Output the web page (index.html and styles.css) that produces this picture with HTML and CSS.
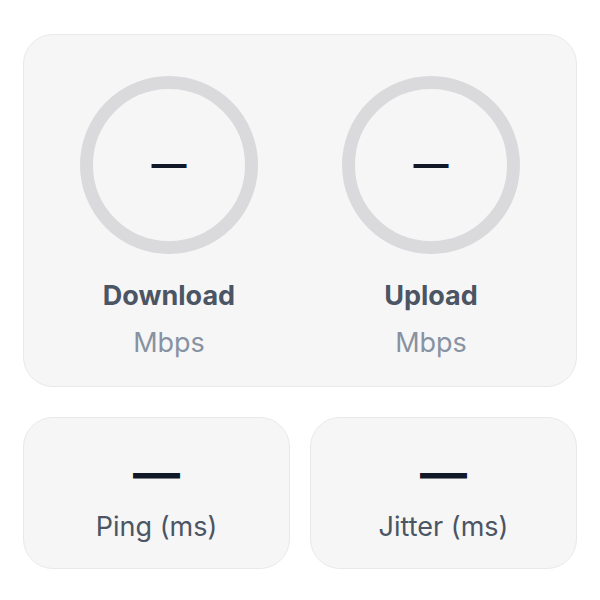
FILE: index.html
```html
<!DOCTYPE html>
<html lang="en">
<head>
<meta charset="utf-8">
<title>Speed test</title>
<link rel="stylesheet" href="styles.css">
</head>
<body>
<main class="wrap">
  <section class="card main-card">
    <div class="metric">
      <div class="gauge"><span class="value">—</span></div>
      <div class="label">Download</div>
      <div class="unit">Mbps</div>
    </div>
    <div class="metric">
      <div class="gauge"><span class="value">—</span></div>
      <div class="label">Upload</div>
      <div class="unit">Mbps</div>
    </div>
  </section>
  <section class="small-row">
    <div class="card small-card">
      <div class="small-value">—</div>
      <div class="small-label">Ping (ms)</div>
    </div>
    <div class="card small-card">
      <div class="small-value">—</div>
      <div class="small-label">Jitter (ms)</div>
    </div>
  </section>
</main>
</body>
</html>
```

FILE: styles.css
```css
html, body {
  margin: 0;
  padding: 0;
  background: #ffffff;
  font-family: "Inter", "Noto Sans", "Liberation Sans", sans-serif;
}

.wrap {
  padding: 34px 23px 0;
  display: flex;
  flex-direction: column;
  gap: 30px;
}

.card {
  background: #f6f6f7;
  border: 1px solid #e9e9eb;
  border-radius: 30px;
  box-sizing: border-box;
}

.main-card {
  height: 353px;
  display: grid;
  grid-template-columns: 1fr 1fr;
  column-gap: 52px;
  padding: 41px 40px 0;
}

.metric {
  display: flex;
  flex-direction: column;
  align-items: center;
}

.gauge {
  width: 178px;
  height: 178px;
  box-sizing: border-box;
  border: 13px solid #dadadd;
  border-radius: 50%;
  display: flex;
  align-items: center;
  justify-content: center;
}

.value {
  font-size: 35px;
  line-height: 1;
  color: #111827;
  font-weight: 700;
  margin-top: -4px;
}

.label {
  margin-top: 25px;
  font-size: 27px;
  line-height: 34px;
  font-weight: 700;
  color: #4b5563;
}

.unit {
  margin-top: 13px;
  font-size: 27px;
  line-height: 34px;
  color: #8792a2;
}

.small-row {
  display: grid;
  grid-template-columns: 1fr 1fr;
  gap: 20px;
}

.small-card {
  height: 152px;
  display: flex;
  flex-direction: column;
  align-items: center;
  padding-top: 35px;
}

.small-value {
  font-size: 47px;
  line-height: 40px;
  color: #111827;
  font-weight: 700;
}

.small-label {
  margin-top: 17px;
  font-size: 27px;
  line-height: 34px;
  color: #4b5563;
}
```
